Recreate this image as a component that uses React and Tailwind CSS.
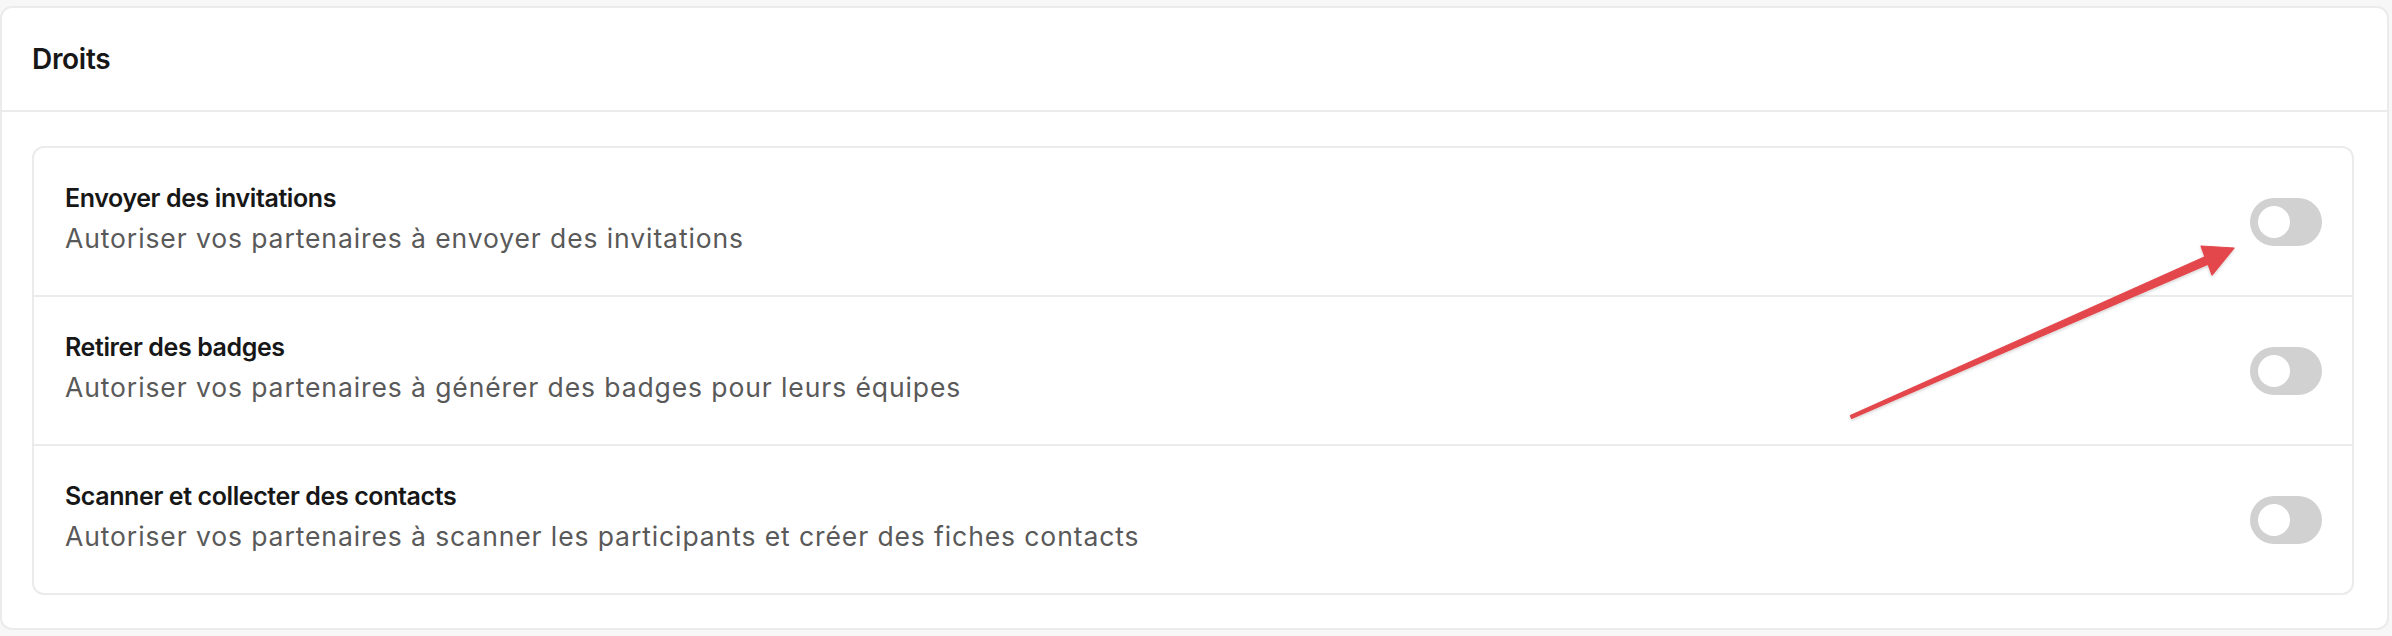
import React from "react";

const rows = [
  {
    title: "Envoyer des invitations",
    desc: "Autoriser vos partenaires à envoyer des invitations",
  },
  {
    title: "Retirer des badges",
    desc: "Autoriser vos partenaires à générer des badges pour leurs équipes",
  },
  {
    title: "Scanner et collecter des contacts",
    desc: "Autoriser vos partenaires à scanner les participants et créer des fiches contacts",
  },
];

function Toggle() {
  return (
    <div className="flex h-[48px] w-[72px] shrink-0 items-center rounded-full bg-[#d0d1d0] pl-[8px]">
      <div className="h-[32px] w-[32px] rounded-full bg-white" />
    </div>
  );
}

function Arrow() {
  const pts = [
    [1851.6, 418.4],
    [2208.1, 264.2],
    [2212, 275],
    [2234, 248],
    [2201, 246],
    [2204.9, 256.8],
    [1850.4, 415.6],
  ]
    .map((p) => p.join(","))
    .join(" ");
  return (
    <svg
      className="pointer-events-none absolute left-0 top-0"
      width="2392"
      height="636"
      viewBox="0 0 2392 636"
    >
      <defs>
        <filter id="sh" x="-5%" y="-20%" width="110%" height="140%">
          <feDropShadow dx="0" dy="1.5" stdDeviation="1.5" floodColor="#000" floodOpacity="0.18" />
        </filter>
      </defs>
      <polygon
        points={pts}
        fill="#e3474c"
        stroke="#e3474c"
        strokeWidth="1.2"
        strokeLinejoin="round"
        filter="url(#sh)"
      />
    </svg>
  );
}

export default function App() {
  return (
    <div
      className="relative h-[636px] w-[2392px] overflow-hidden bg-[#f7f7f7] pt-[6px] pr-[3px]"
      style={{ fontFamily: "Inter, 'Noto Sans', sans-serif" }}
    >
      <div className="rounded-[12px] border-2 border-[#ebebeb] bg-white">
        <div className="flex h-[104px] items-center border-b-2 border-[#ebebeb] pl-[30px]">
          <span className="text-[28px] font-semibold leading-none tracking-[-0.3px] text-[#171717]">
            Droits
          </span>
        </div>
        <div className="pl-[30px] pr-[33px] pt-[34px] pb-[33px]">
          <div className="rounded-[12px] border-2 border-[#ebebeb]">
            {rows.map((r, i) => (
              <div
                key={r.title}
                className={
                  "flex items-center justify-between pl-[31px] pr-[30px] " +
                  (i > 0 ? "h-[149px] border-t-2 border-[#ebebeb]" : "h-[147px]")
                }
              >
                <div className="flex flex-col self-start pt-[35px]">
                  <div className="text-[25px] font-semibold leading-[30px] tracking-[-0.4px] text-[#171717]">
                    {r.title}
                  </div>
                  <div className="mt-[8px] text-[26.5px] leading-[34px] tracking-[0.9px] text-[#595959]">
                    {r.desc}
                  </div>
                </div>
                <Toggle />
              </div>
            ))}
          </div>
        </div>
      </div>
      <Arrow />
    </div>
  );
}
